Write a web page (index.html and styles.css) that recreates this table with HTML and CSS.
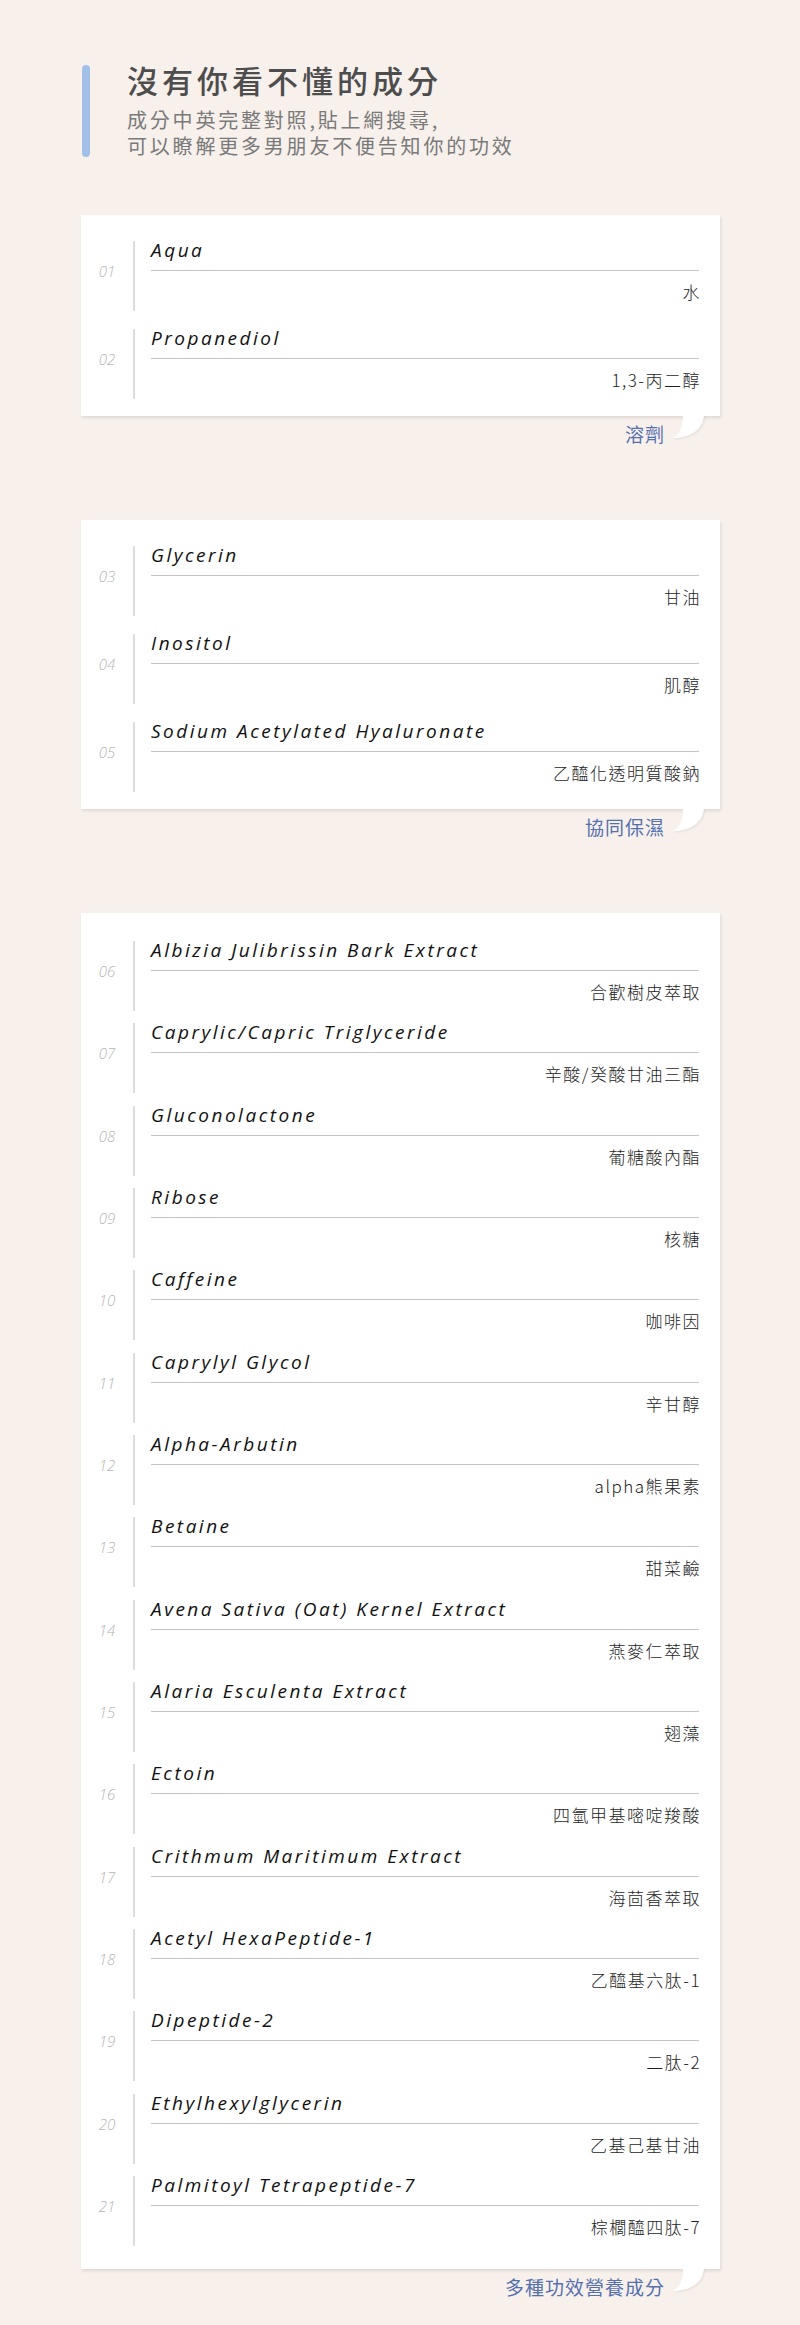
FILE: index.html
```html
<!DOCTYPE html>
<html lang="zh-Hant">
<head>
<meta charset="utf-8">
<title>沒有你看不懂的成分</title>
<link rel="stylesheet" href="styles.css">
</head>
<body>
<div class="page">
  <header class="head">
    <div class="bar"></div>
    <div class="head-text">
      <h1 class="title">沒有你看不懂的成分</h1>
      <p class="sub">成分中英完整對照,貼上網搜尋,<br>可以瞭解更多男朋友不便告知你的功效</p>
    </div>
  </header>

  <section class="sec sec1">
    <div class="card">
      <div class="row"><div class="num">01</div><div class="body"><div class="en">Aqua</div><div class="zh">水</div></div></div>
      <div class="row"><div class="num">02</div><div class="body"><div class="en">Propanediol</div><div class="zh">1,3-丙二醇</div></div></div>
      <svg class="tail" viewBox="0 0 40 26" width="40" height="26"><path d="M13 0 C13 12 10 19 3 23 C20 23 33 15 34 0 Z"/></svg>
    </div>
    <div class="label">溶劑</div>
  </section>

  <section class="sec sec2">
    <div class="card">
      <div class="row"><div class="num">03</div><div class="body"><div class="en">Glycerin</div><div class="zh">甘油</div></div></div>
      <div class="row"><div class="num">04</div><div class="body"><div class="en">Inositol</div><div class="zh">肌醇</div></div></div>
      <div class="row"><div class="num">05</div><div class="body"><div class="en">Sodium Acetylated Hyaluronate</div><div class="zh">乙醯化透明質酸鈉</div></div></div>
      <svg class="tail" viewBox="0 0 40 26" width="40" height="26"><path d="M13 0 C13 12 10 19 3 23 C20 23 33 15 34 0 Z"/></svg>
    </div>
    <div class="label">協同保濕</div>
  </section>

  <section class="sec sec3">
    <div class="card card-long">
      <div class="row"><div class="num">06</div><div class="body"><div class="en">Albizia Julibrissin Bark Extract</div><div class="zh">合歡樹皮萃取</div></div></div>
      <div class="row"><div class="num">07</div><div class="body"><div class="en">Caprylic/Capric Triglyceride</div><div class="zh">辛酸/癸酸甘油三酯</div></div></div>
      <div class="row"><div class="num">08</div><div class="body"><div class="en">Gluconolactone</div><div class="zh">葡糖酸內酯</div></div></div>
      <div class="row"><div class="num">09</div><div class="body"><div class="en">Ribose</div><div class="zh">核糖</div></div></div>
      <div class="row"><div class="num">10</div><div class="body"><div class="en">Caffeine</div><div class="zh">咖啡因</div></div></div>
      <div class="row"><div class="num">11</div><div class="body"><div class="en">Caprylyl Glycol</div><div class="zh">辛甘醇</div></div></div>
      <div class="row"><div class="num">12</div><div class="body"><div class="en">Alpha-Arbutin</div><div class="zh">alpha熊果素</div></div></div>
      <div class="row"><div class="num">13</div><div class="body"><div class="en">Betaine</div><div class="zh">甜菜鹼</div></div></div>
      <div class="row"><div class="num">14</div><div class="body"><div class="en">Avena Sativa (Oat) Kernel Extract</div><div class="zh">燕麥仁萃取</div></div></div>
      <div class="row"><div class="num">15</div><div class="body"><div class="en">Alaria Esculenta Extract</div><div class="zh">翅藻</div></div></div>
      <div class="row"><div class="num">16</div><div class="body"><div class="en">Ectoin</div><div class="zh">四氫甲基嘧啶羧酸</div></div></div>
      <div class="row"><div class="num">17</div><div class="body"><div class="en">Crithmum Maritimum Extract</div><div class="zh">海茴香萃取</div></div></div>
      <div class="row"><div class="num">18</div><div class="body"><div class="en">Acetyl HexaPeptide-1</div><div class="zh">乙醯基六肽-1</div></div></div>
      <div class="row"><div class="num">19</div><div class="body"><div class="en">Dipeptide-2</div><div class="zh">二肽-2</div></div></div>
      <div class="row"><div class="num">20</div><div class="body"><div class="en">Ethylhexylglycerin</div><div class="zh">乙基己基甘油</div></div></div>
      <div class="row"><div class="num">21</div><div class="body"><div class="en">Palmitoyl Tetrapeptide-7</div><div class="zh">棕櫚醯四肽-7</div></div></div>
      <svg class="tail" viewBox="0 0 40 26" width="40" height="26"><path d="M13 0 C13 12 10 19 3 23 C20 23 33 15 34 0 Z"/></svg>
    </div>
    <div class="label">多種功效營養成分</div>
  </section>
</div>
</body>
</html>
```

FILE: styles.css
```css
* { box-sizing: border-box; }
html, body { margin: 0; padding: 0; }
body {
  background: #f8f0eb;
  font-family: "Noto Sans CJK TC", "Noto Sans", sans-serif;
  color: #222;
}
.page {
  width: 800px;
  min-height: 2325px;
  padding: 60px 80px 0 81px;
}
.head {
  display: flex;
  align-items: flex-start;
}
.bar {
  width: 8px;
  height: 92px;
  margin-top: 5px;
  margin-left: 1px;
  border-radius: 4px;
  background: #a2c0e7;
  flex: none;
}
.head-text { margin-left: 37px; }
.title {
  margin: 0;
  font-family: "Noto Sans CJK TC", sans-serif;
  font-weight: 500;
  font-size: 31px;
  line-height: 40px;
  letter-spacing: 4px;
  color: #4d4d4d;
}
.sub {
  margin: 7px 0 0;
  font-size: 20px;
  line-height: 26px;
  letter-spacing: 2.8px;
  color: #7a7a7a;
}
.sec { position: relative; }
.sec1 { margin-top: 56px; }
.sec2 { margin-top: 74px; }
.sec3 { margin-top: 74px; }
.card {
  position: relative;
  background: #fff;
  box-shadow: 1px 2px 3px rgba(0, 0, 0, 0.10);
  padding: 26px 21px 17px 0;
  display: flex;
  flex-direction: column;
  gap: 18px;
}
.card-long {
  padding-top: 28px;
  padding-bottom: 23px;
  gap: 12.33px;
}
.row {
  display: flex;
  height: 70px;
}
.num {
  width: 52px;
  flex: none;
  padding-top: 21px;
  text-align: center;
  font-family: "Open Sans", sans-serif;
  font-style: italic;
  font-weight: 300;
  font-size: 15px;
  line-height: 18px;
  color: #b5b5b5;
}
.body {
  flex: 1;
  border-left: 2px solid #dcdcdc;
  padding-left: 16px;
  display: flex;
  flex-direction: column;
}
.en {
  font-family: "Open Sans", sans-serif;
  font-style: italic;
  font-size: 19px;
  line-height: 18px;
  letter-spacing: 2.5px;
  color: #111;
  padding-bottom: 11px;
  border-bottom: 1px solid #c4c4c4;
}
.zh {
  margin-top: 11px;
  margin-right: -2px;
  text-align: right;
  font-family: "Noto Sans CJK TC", sans-serif;
  font-weight: 300;
  font-size: 17px;
  line-height: 20px;
  letter-spacing: 1.5px;
  color: #1e1e1e;
}
.tail {
  position: absolute;
  right: 10px;
  top: calc(100% - 1px);
  fill: #fff;
  filter: drop-shadow(1px 1px 1px rgba(0, 0, 0, 0.08));
}
.label {
  margin-top: 6px;
  padding-right: 55px;
  text-align: right;
  font-size: 19px;
  line-height: 24px;
  letter-spacing: 1px;
  color: #5470b1;
}
```
